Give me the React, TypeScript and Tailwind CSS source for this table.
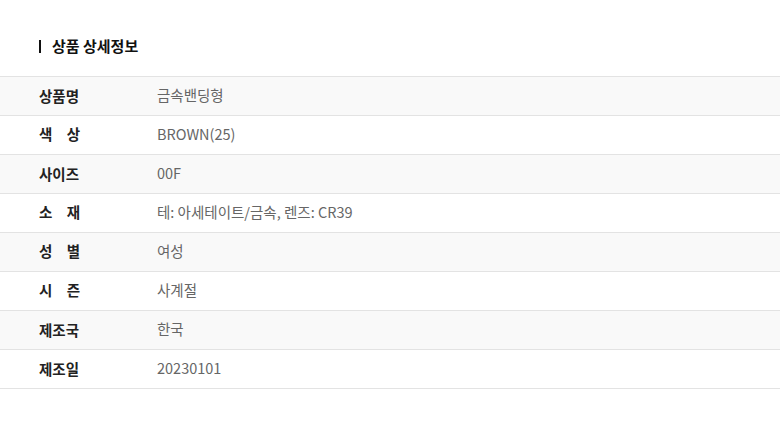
import React from "react";

const rows: { label: string[]; value: string }[] = [
  { label: ["상품명"], value: "금속밴딩형" },
  { label: ["색", "상"], value: "BROWN(25)" },
  { label: ["사이즈"], value: "00F" },
  { label: ["소", "재"], value: "테: 아세테이트/금속, 렌즈: CR39" },
  { label: ["성", "별"], value: "여성" },
  { label: ["시", "즌"], value: "사계절" },
  { label: ["제조국"], value: "한국" },
  { label: ["제조일"], value: "20230101" },
];

export default function App() {
  return (
    <div
      className="w-[780px] h-[427px] bg-white"
      style={{ fontFamily: '"Noto Sans CJK KR", "Noto Sans", sans-serif' }}
    >
      <div className="pt-[36px] pl-[39px] flex items-center h-[56px]">
        <div className="w-[2px] h-[13px] bg-[#111] mr-[11px]" />
        <div className="text-[15px] font-bold text-[#111] leading-[20px]">상품 상세정보</div>
      </div>
      <div className="mt-[20px] border-t border-[#e3e3e3]">
        {rows.map((r, i) => (
          <div
            key={i}
            className={`flex items-center h-[39px] pb-[2px] border-b border-[#e3e3e3] ${i % 2 === 0 ? "bg-[#f9f9f9]" : "bg-white"}`}
          >
            <div className="w-[157px] pl-[39px] shrink-0">
              {r.label.length === 1 ? (
                <span className="text-[14.5px] font-bold text-[#222]">{r.label[0]}</span>
              ) : (
                <span className="flex justify-between w-[41px] text-[14.5px] font-bold text-[#222]">
                  <span>{r.label[0]}</span>
                  <span>{r.label[1]}</span>
                </span>
              )}
            </div>
            <div className="text-[14.5px] text-[#666]">{r.value}</div>
          </div>
        ))}
      </div>
    </div>
  );
}
